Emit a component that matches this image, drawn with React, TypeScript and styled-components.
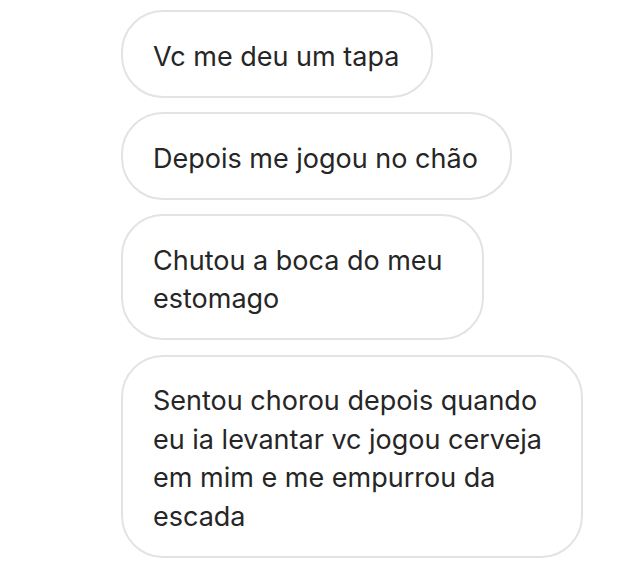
import React from "react";
import styled, { createGlobalStyle } from "styled-components";

const Global = createGlobalStyle`
  html, body {
    margin: 0;
    padding: 0;
    background: #ffffff;
  }
  body {
    font-family: Inter, "Noto Sans", "Liberation Sans", sans-serif;
    -webkit-font-smoothing: antialiased;
  }
`;

const Thread = styled.div`
  width: 640px;
  height: 570px;
  box-sizing: border-box;
  padding: 10px 0 0 121px;
  display: flex;
  flex-direction: column;
  align-items: flex-start;
  gap: 14.5px;
  background: #ffffff;
`;

const Bubble = styled.div<{ $multi?: boolean }>`
  box-sizing: border-box;
  border: 2px solid #e3e3e3;
  border-radius: 42px;
  padding: 25.5px ${(p) => (p.$multi ? "39px" : "32px")} 19.5px 30px;
  font-size: 27px;
  line-height: 38.5px;
  color: #262626;
  white-space: nowrap;
  background: #ffffff;
`;

const messages: string[][] = [
  ["Vc me deu um tapa"],
  ["Depois me jogou no chão"],
  ["Chutou a boca do meu", "estomago"],
  [
    "Sentou chorou depois quando",
    "eu ia levantar vc jogou cerveja",
    "em mim e me empurrou da",
    "escada",
  ],
];

export default function App() {
  return (
    <>
      <Global />
      <Thread>
        {messages.map((lines, i) => (
          <Bubble key={i} $multi={lines.length > 1}>
            {lines.map((l, j) => (
              <React.Fragment key={j}>
                {j > 0 && <br />}
                {l}
              </React.Fragment>
            ))}
          </Bubble>
        ))}
      </Thread>
    </>
  );
}
